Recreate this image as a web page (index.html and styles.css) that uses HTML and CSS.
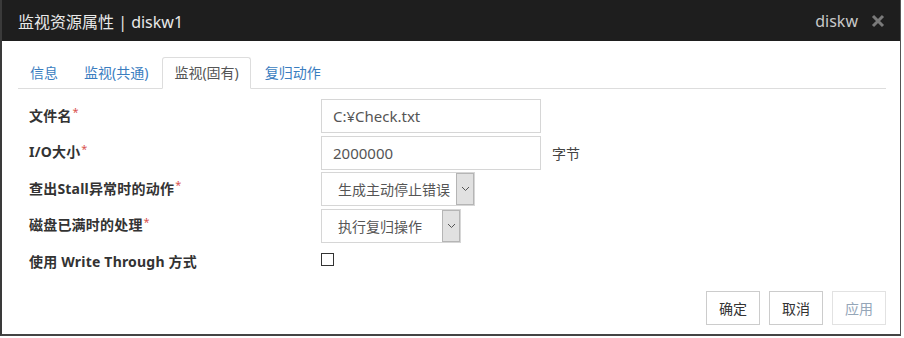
FILE: index.html
```html
<!DOCTYPE html>
<html lang="zh-CN">
<head>
<meta charset="utf-8">
<title>监视资源属性</title>
<link rel="stylesheet" href="styles.css">
</head>
<body>
<div class="dialog">
  <div class="titlebar">
    <span class="title">监视资源属性 | diskw1</span>
    <span class="title-right">diskw</span>
    <svg class="close" width="14" height="14" viewBox="0 0 14 14"><path d="M2 2 L12 12 M12 2 L2 12" stroke="#7a7a7a" stroke-width="3" stroke-linecap="butt"/></svg>
  </div>
  <div class="body">
    <ul class="tabs">
      <li class="tab">信息</li>
      <li class="tab">监视(共通)</li>
      <li class="tab active">监视(固有)</li>
      <li class="tab">复归动作</li>
    </ul>
    <div class="form">
      <div class="label">文件名<sup>*</sup></div>
      <div class="value"><div class="input">C:¥Check.txt</div></div>
      <div class="label">I/O大小<sup>*</sup></div>
      <div class="value"><div class="input">2000000</div><span class="unit">字节</span></div>
      <div class="label">查出Stall异常时的动作<sup>*</sup></div>
      <div class="value"><div class="select sel1"><span class="sel-text">生成主动停止错误</span><span class="arrow"><svg width="9" height="6" viewBox="0 0 9 6"><path d="M1 1 L4.5 4.5 L8 1" fill="none" stroke="#555" stroke-width="1"/></svg></span></div></div>
      <div class="label">磁盘已满时的处理<sup>*</sup></div>
      <div class="value"><div class="select sel2"><span class="sel-text">执行复归操作</span><span class="arrow"><svg width="9" height="6" viewBox="0 0 9 6"><path d="M1 1 L4.5 4.5 L8 1" fill="none" stroke="#555" stroke-width="1"/></svg></span></div></div>
      <div class="label">使用 Write Through 方式</div>
      <div class="value"><span class="checkbox"></span></div>
    </div>
    <div class="footer">
      <button class="btn">确定</button>
      <button class="btn">取消</button>
      <button class="btn disabled">应用</button>
    </div>
  </div>
</div>
</body>
</html>
```
FILE: styles.css
```css
* { box-sizing: border-box; }
html, body { margin: 0; padding: 0; background: #fff; }
body { font-family: "Noto Sans", "Noto Sans CJK SC", sans-serif; }

.dialog {
  width: 901px;
  height: 336px;
  border-left: 2px solid #3a3a3a;
  border-right: 1px solid #555;
  border-bottom: 2px solid #444;
  background: #fff;
  display: flex;
  flex-direction: column;
}

.titlebar {
  height: 41px;
  background: #1e1e1e;
  display: flex;
  align-items: center;
  padding: 0 15px 0 16px;
  color: #e8e8e8;
  flex-shrink: 0;
}
.title { font-size: 16px; flex: 1; }
.title-right { font-size: 16px; color: #c8c8c8; margin-right: 13px; }
.close { display: block; }

.body { padding: 16px 14px 0 16px; }

.tabs {
  list-style: none;
  margin: 0;
  padding: 0;
  display: flex;
  border-bottom: 1px solid #ddd;
}
.tab {
  font-size: 14px;
  line-height: 20px;
  padding: 5px 11px;
  margin-right: 2px;
  margin-bottom: -1px;
  border: 1px solid transparent;
  border-radius: 3px 3px 0 0;
  color: #3a7dbf;
}
.tab.active {
  color: #555;
  border-color: #ddd;
  border-bottom-color: #fff;
  background: #fff;
}

.form {
  margin-top: 10px;
  display: grid;
  grid-template-columns: 303px 1fr;
  grid-template-rows: 34px 34px 34px 34px 34px;
  row-gap: 2.5px;
}
.label {
  padding-left: 11px;
  padding-bottom: 3px;
  font-size: 14px;
  font-weight: bold;
  letter-spacing: 0.2px;
  color: #333;
  display: flex;
  align-items: center;
}
.label sup {
  color: #d9534f;
  font-size: 11px;
  font-weight: normal;
  align-self: flex-start;
  margin-top: 5px;
  margin-left: 1px;
}
.value { display: flex; align-items: center; }
.input {
  width: 220px;
  height: 34px;
  border: 1px solid #d6d6d6;
  padding: 0 11px;
  font-size: 15px;
  color: #555;
  display: flex;
  align-items: center;
}
.unit { font-size: 14px; color: #444; margin-left: 11px; }

.select {
  height: 34px;
  border: 1px solid #d6d6d6;
  display: flex;
  align-items: stretch;
  font-size: 14px;
  color: #555;
}
.sel1 { width: 154px; }
.sel2 { width: 140px; }
.sel-text { flex: 1; display: flex; align-items: center; padding-left: 16px; }
.arrow {
  width: 18px;
  background: #e1e1e1;
  border: 1px solid #b5b5b5;
  display: flex;
  align-items: center;
  justify-content: center;
}

.checkbox {
  width: 13px;
  height: 13px;
  border: 1px solid #333;
  background: #fff;
  margin-top: -6px;
}

.footer {
  margin-top: 12px;
  display: flex;
  justify-content: flex-end;
  gap: 9px;
}
.btn {
  width: 54px;
  height: 34px;
  border: 1px solid #ccc;
  background: #fff;
  font-family: "Noto Sans CJK SC", sans-serif;
  font-size: 14px;
  color: #333;
  padding: 0;
}
.btn.disabled { color: #95a6b8; border-color: #e2e2e2; }
```
